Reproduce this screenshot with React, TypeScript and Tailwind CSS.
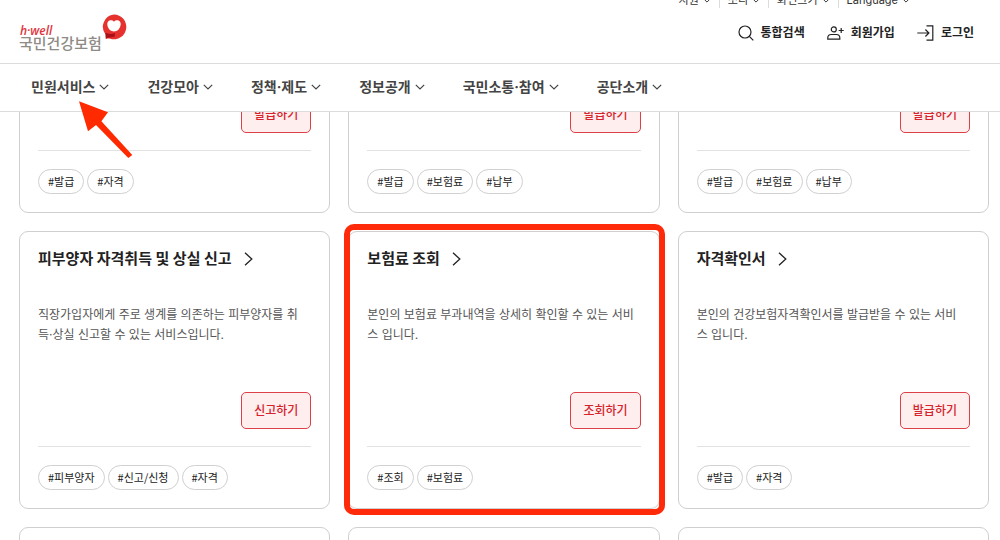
type Service = {
  title?: string;
  description?: string;
  action?: string;
  tags?: string[];
  highlighted?: boolean;
};

const UTIL_MENU = ["지원", "소리", "화면크기", "Language"];

const NAV_ITEMS = [
  "민원서비스",
  "건강모아",
  "정책·제도",
  "정보공개",
  "국민소통·참여",
  "공단소개",
];

const SERVICES: Service[] = [
  { action: "발급하기", tags: ["발급", "자격"] },
  { action: "발급하기", tags: ["발급", "보험료", "납부"] },
  { action: "발급하기", tags: ["발급", "보험료", "납부"] },
  {
    title: "피부양자 자격취득 및 상실 신고",
    description:
      "직장가입자에게 주로 생계를 의존하는 피부양자를 취득·상실 신고할 수 있는 서비스입니다.",
    action: "신고하기",
    tags: ["피부양자", "신고/신청", "자격"],
  },
  {
    title: "보험료 조회",
    description: "본인의 보험료 부과내역을 상세히 확인할 수 있는 서비스 입니다.",
    action: "조회하기",
    tags: ["조회", "보험료"],
    highlighted: true,
  },
  {
    title: "자격확인서",
    description: "본인의 건강보험자격확인서를 발급받을 수 있는 서비스 입니다.",
    action: "발급하기",
    tags: ["발급", "자격"],
  },
  {},
  {},
  {},
];

function ChevronDown({ className }: { className: string }) {
  return (
    <svg viewBox="0 0 10 6" fill="none" stroke="currentColor" strokeWidth="1.2" className={className}>
      <path d="M0.8 0.8 5 5 9.2 0.8" />
    </svg>
  );
}

function SearchIcon() {
  return (
    <svg viewBox="0 0 16 16" fill="none" stroke="currentColor" strokeWidth="1.2" className="h-4 w-4">
      <circle cx="7" cy="7" r="6" />
      <path d="m11.3 11.3 4 4" />
    </svg>
  );
}

function JoinIcon() {
  return (
    <svg viewBox="0 0 17 16" fill="none" stroke="currentColor" strokeWidth="1.2" className="h-4 w-[17px]">
      <circle cx="6.8" cy="4.4" r="2.5" />
      <path d="M0.8 14.2v-1.4c0-2 1.4-3.3 3.4-3.3h5.2c2 0 3.4 1.3 3.4 3.3v1.4Z" />
      <path d="M14.2 3v5M11.7 5.5h5" />
    </svg>
  );
}

function LoginIcon() {
  return (
    <svg viewBox="0 0 17 16" fill="none" stroke="currentColor" strokeWidth="1.2" className="h-4 w-[17px]">
      <path d="M9.5 0.8h6.3v14.4H9.5" />
      <path d="M0.3 8h11.6M8.4 4.5 11.9 8l-3.5 3.5" />
    </svg>
  );
}

function Logo() {
  return (
    <a href="#" className="flex">
      <span className="flex w-[82px] flex-col pt-[11px] whitespace-nowrap">
        <span className="pl-px font-['Open_Sans',sans-serif] text-xs leading-3 font-semibold text-[#e0343c] italic">
          h·well
        </span>
        <span className="text-[15px] leading-[14px] font-medium text-[#8e8a85]">국민건강보험</span>
      </span>
      <svg viewBox="0 0 26 26" className="h-[26px] w-[26px]">
        <path
          d="M13 0.5a12.4 12.4 0 1 1-3.6 24.3c-1.6-.4-3.2-.3-4.6.2v-4.2A12.4 12.4 0 0 1 13 .5Z"
          fill="#e5322f"
        />
        <path d="M4.4 18.8c3 1.4 6.5 1.5 9.4.2v3.4c-3 .8-6.2.9-9 2Z" fill="#a80f16" />
        <path
          d="M13 7.8c1.8-2 5-1.9 6.2.3 1.3 2.6-.2 5.9-2.1 8-1.7 1.7-6.5 1.7-8.2 0-1.9-2.1-3.4-5.4-2.1-8 1.2-2.2 4.4-2.3 6.2-.3Z"
          fill="#fff"
        />
      </svg>
    </a>
  );
}

function Header() {
  return (
    <header className="relative z-10 bg-white">
      <div className="overflow-hidden border-b border-[#dcdcdc]">
        <div className="-mt-[10px] flex h-5 justify-end pr-[90px] text-[11px] leading-5 text-[#333]">
          {UTIL_MENU.map((item, i) => (
            <div key={item} className="flex items-center">
              {i > 0 && <span className="mr-2 ml-2 h-4 w-px bg-[#dcdcdc]" />}
              <button type="button" className="flex items-center gap-1">
                {item}
                <ChevronDown className="h-[5px] w-2" />
              </button>
            </div>
          ))}
        </div>
        <div className="flex h-[53px] justify-between pr-[26px] pl-[19px]">
          <div className="pt-1">
            <Logo />
          </div>
          <div className="flex h-[45px] items-center gap-[22px] text-xs font-bold text-[#222]">
            <a href="#" className="flex items-center gap-[7px]">
              <SearchIcon />
              통합검색
            </a>
            <a href="#" className="flex items-center gap-[7px]">
              <JoinIcon />
              회원가입
            </a>
            <a href="#" className="flex items-center gap-[7px]">
              <LoginIcon />
              로그인
            </a>
          </div>
        </div>
      </div>

      <nav className="flex h-12 items-center gap-[38px] border-b border-[#dcdcdc] pb-px pl-[31px] text-sm font-bold text-[#444]">
        {NAV_ITEMS.map((item) => (
          <button key={item} type="button" className="flex items-center gap-1 whitespace-nowrap">
            {item}
            <ChevronDown className="h-[6px] w-[10px]" />
          </button>
        ))}
      </nav>

      {/* Pointer to the first menu */}
      <svg viewBox="0 0 56 60" className="pointer-events-none absolute top-[100px] left-[78px] h-[60px] w-14">
        <path d="M1 1.3 30 12.3 23.4 21.3 54.3 55 50.3 58 18 25 10 31.3Z" fill="#ff2a00" />
      </svg>
    </header>
  );
}

function ServiceCard({ title, description, action, tags, highlighted }: Service) {
  return (
    <article className="relative flex min-h-[278px] flex-col rounded-[9px] border border-[#cfcfcf] bg-white px-[18px] pt-[15px] pb-[18px]">
      {title && (
        <h2 className="text-[15px] leading-6 font-bold text-[#222]">
          <a href="#" className="flex items-center gap-3">
            {title}
            <svg viewBox="0 0 9 14" fill="none" stroke="currentColor" strokeWidth="1.3" className="h-[14px] w-[9px]">
              <path d="M1 0.8 7.8 7 1 13.2" />
            </svg>
          </a>
        </h2>
      )}
      {description && <p className="mt-[34px] pr-1 text-xs leading-5 text-[#555]">{description}</p>}
      {action && (
        <div className="mt-auto flex justify-end pb-[17px]">
          <button
            type="button"
            className="h-[37px] rounded-[5px] border border-[#dc4048] bg-[#feeeee] px-3 text-xs font-medium text-[#d5222b]"
          >
            {action}
          </button>
        </div>
      )}
      {tags && (
        <ul className="flex gap-[3px] border-t border-[#e2e2e2] pt-[18px] font-['Noto_Sans_CJK_KR',sans-serif]">
          {tags.map((tag) => (
            <li
              key={tag}
              className="h-[25px] rounded-full border border-[#d0d0d0] px-[9px] text-[11px] leading-[23px] text-[#222]"
            >
              #{tag}
            </li>
          ))}
        </ul>
      )}
      {highlighted && (
        <div className="pointer-events-none absolute -top-2 -right-[6px] -bottom-[7px] -left-[5px] rounded-[10px] border-[6px] border-[#ff2a0a]" />
      )}
    </article>
  );
}

export default function App() {
  return (
    <div className="h-screen overflow-hidden bg-white font-[Inter,'Noto_Sans_CJK_KR',sans-serif]">
      <Header />
      {/* The list is scrolled partly under the header */}
      <main className="-mt-[177px] grid grid-cols-3 gap-[18px] pr-[11px] pl-[19px]">
        {SERVICES.map((service, i) => (
          <ServiceCard key={i} {...service} />
        ))}
      </main>
    </div>
  );
}
